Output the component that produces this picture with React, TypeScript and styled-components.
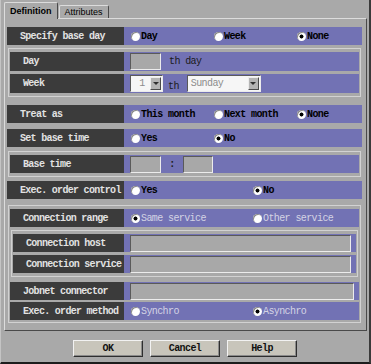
import styled, { createGlobalStyle } from 'styled-components';

const GlobalStyle = createGlobalStyle`
  html, body { margin: 0; padding: 0; background: #a9a9a9; }
  body { font-family: "Liberation Mono", "DejaVu Sans Mono", monospace; }
`;

const Window = styled.div`
  width: 371px;
  height: 364px;
  box-sizing: border-box;
  background: #a9a9a9;
  border-left: 1px solid #c4c4c4;
  border-right: 2px solid #3a3a3a;
  border-bottom: 2px solid #1c1c1c;
  padding: 2px 0 0 3px;
  display: flex;
  flex-direction: column;
`;

const TabBar = styled.div`
  display: flex;
  align-items: flex-end;
  height: 16px;
`;

const Tab = styled.div<{ $active?: boolean }>`
  box-sizing: border-box;
  height: ${(p) => (p.$active ? 17 : 13)}px;
  margin-bottom: ${(p) => (p.$active ? -1 : 0)}px;
  margin-left: ${(p) => (p.$active ? 0 : 1)}px;
  position: relative;
  z-index: ${(p) => (p.$active ? 1 : 0)};
  padding: 0 5px;
  display: flex;
  align-items: center;
  background: #a9a9a9;
  color: #000;
  font: ${(p) => (p.$active ? 'bold' : 'normal')} 9px "Liberation Sans", Arial, sans-serif;
  border-top: 1px solid #dcdcdc;
  border-left: 1px solid #dcdcdc;
  border-right: 1px solid #4a4a4a;
  border-radius: 2px 2px 0 0;
`;

const Panel = styled.div`
  width: 363px;
  height: 313px;
  box-sizing: border-box;
  border: 1px solid;
  border-color: #dcdcdc #4a4a4a #4a4a4a #dcdcdc;
  padding: 8px 4px 0 2px;
  display: flex;
  flex-direction: column;
`;

const Group = styled.div<{ $mt?: number; $pb?: number }>`
  margin: ${(p) => p.$mt ?? 0}px 1px 0;
  border: 1px solid #d2d2d2;
  padding: 3px 1px ${(p) => p.$pb ?? 3}px;
  display: flex;
  flex-direction: column;
`;

const Row = styled.div<{ $h?: number; $mt?: number }>`
  display: flex;
  height: ${(p) => p.$h ?? 18}px;
  margin-top: ${(p) => p.$mt ?? 0}px;
`;

const Label = styled.div<{ $w: number }>`
  flex: 0 0 ${(p) => p.$w}px;
  box-sizing: border-box;
  background: #3b3b3b;
  color: #e2e2e2;
  display: flex;
  align-items: center;
  padding-left: 13px;
  font-size: 10px;
  font-weight: bold;
  letter-spacing: -0.7px;
  white-space: nowrap;
`;

const Field = styled.div`
  flex: 1;
  background: #7272b4;
  display: flex;
  align-items: center;
  padding: 0 5px 0 6px;
  font-size: 10px;
  font-weight: bold;
  letter-spacing: -0.6px;
  white-space: nowrap;
`;

const Options = styled.div<{ $cols: string }>`
  flex: 1;
  display: grid;
  grid-template-columns: ${(p) => p.$cols};
  align-items: center;
  padding-left: 1px;
`;

const Option = styled.label<{ $disabled?: boolean }>`
  display: flex;
  align-items: center;
  gap: 1px;
  color: ${(p) => (p.$disabled ? '#d4d4e4' : '#000')};
  font-weight: ${(p) => (p.$disabled ? 'normal' : 'bold')};
`;

const Radio = styled.span<{ $on?: boolean }>`
  flex: none;
  width: 9px;
  height: 9px;
  border-radius: 50%;
  background: ${(p) => (p.$on ? 'radial-gradient(circle, #000 0 1.7px, #fff 2.3px)' : '#fff')};
  box-shadow: inset 1px 1px 0 #8a8a8a;
`;

const TextBox = styled.div<{ $w?: number }>`
  box-sizing: border-box;
  height: 17px;
  ${(p) => (p.$w ? `width: ${p.$w}px;` : 'flex: 1;')}
  background: #a8a8a8;
  border: 1px solid;
  border-color: #5a5a5a #ececec #ececec #5a5a5a;
`;

const Select = styled.div<{ $w: number }>`
  box-sizing: border-box;
  width: ${(p) => p.$w}px;
  height: 17px;
  display: flex;
  align-items: center;
  background: #f6f6f6;
  color: #8c8c8c;
  font-weight: normal;
  border: 1px solid;
  border-color: #5a5a5a #ececec #ececec #5a5a5a;
  padding: 0 1px 0 3px;
`;

const SelectValue = styled.span<{ $center?: boolean }>`
  flex: 1;
  text-align: ${(p) => (p.$center ? 'center' : 'left')};
`;

const SelectButton = styled.span`
  box-sizing: border-box;
  width: 11px;
  height: 13px;
  background: #b4b4b4;
  border: 1px solid;
  border-color: #ececec #4a4a4a #4a4a4a #ececec;
  display: flex;
  align-items: center;
  justify-content: center;

  &::before {
    content: '';
    border-left: 3px solid transparent;
    border-right: 3px solid transparent;
    border-top: 3px solid #303030;
  }
`;

const Suffix = styled.span<{ $low?: boolean }>`
  color: #1a1a1a;
  font-weight: normal;
  margin: 0 ${(p) => (p.$low ? 8 : 7)}px 0 ${(p) => (p.$low ? 5 : 8)}px;
  align-self: ${(p) => (p.$low ? 'flex-end' : 'center')};
  padding-bottom: ${(p) => (p.$low ? 1 : 0)}px;
`;

const Colon = styled.span`
  color: #1a1a1a;
  width: 22px;
  text-align: center;
`;

const ButtonBar = styled.div`
  display: flex;
  justify-content: center;
  gap: 7px;
  margin-top: 9px;
  padding-right: 3px;
`;

const Button = styled.button`
  box-sizing: border-box;
  width: 70px;
  height: 17px;
  padding: 0;
  background: #c8c5bb;
  color: #111;
  border: 1px solid;
  border-color: #f2f2f2 #2e2e2e #2e2e2e #f2f2f2;
  box-shadow: inset -1px -1px 0 #8a8a8a;
  font: bold 10px "Liberation Mono", monospace;
  letter-spacing: -0.6px;
`;

type Opt = { text: string; on?: boolean; disabled?: boolean };

const RadioRow = ({ cols, opts }: { cols: string; opts: Opt[] }) => (
  <Options $cols={cols}>
    {opts.map((o) => (
      <Option key={o.text} $disabled={o.disabled}>
        <Radio $on={o.on} />
        {o.text}
      </Option>
    ))}
  </Options>
);

const THREE = '83px 83px auto';
const TWO = '122px auto';

export default function App() {
  return (
    <>
      <GlobalStyle />
      <Window>
        <TabBar>
          <Tab $active>Definition</Tab>
          <Tab>Attributes</Tab>
        </TabBar>
        <Panel>
          <Row>
            <Label $w={117}>Specify base day</Label>
            <Field>
              <RadioRow cols={THREE} opts={[{ text: 'Day' }, { text: 'Week' }, { text: 'None', on: true }]} />
            </Field>
          </Row>

          <Group $mt={3}>
            <Row $h={19}>
              <Label $w={114}>Day</Label>
              <Field>
                <TextBox $w={31} />
                <Suffix>th day</Suffix>
              </Field>
            </Row>
            <Row $h={19} $mt={3}>
              <Label $w={114}>Week</Label>
              <Field>
                <Select $w={33}>
                  <SelectValue $center>1</SelectValue>
                  <SelectButton />
                </Select>
                <Suffix $low>th</Suffix>
                <Select $w={74}>
                  <SelectValue>Sunday</SelectValue>
                  <SelectButton />
                </Select>
              </Field>
            </Row>
          </Group>

          <Row $mt={8}>
            <Label $w={117}>Treat as</Label>
            <Field>
              <RadioRow
                cols={THREE}
                opts={[{ text: 'This month' }, { text: 'Next month' }, { text: 'None', on: true }]}
              />
            </Field>
          </Row>

          <Row $mt={6}>
            <Label $w={117}>Set base time</Label>
            <Field>
              <RadioRow cols="83px auto" opts={[{ text: 'Yes' }, { text: 'No', on: true }]} />
            </Field>
          </Row>

          <Group $mt={4}>
            <Row>
              <Label $w={114}>Base time</Label>
              <Field>
                <TextBox $w={31} />
                <Colon>:</Colon>
                <TextBox $w={30} />
              </Field>
            </Row>
          </Group>

          <Row $mt={4}>
            <Label $w={117}>Exec. order control</Label>
            <Field>
              <RadioRow cols={TWO} opts={[{ text: 'Yes' }, { text: 'No', on: true }]} />
            </Field>
          </Row>

          <Group $mt={6} $pb={2}>
            <Row>
              <Label $w={114}>Connection range</Label>
              <Field>
                <RadioRow
                  cols={TWO}
                  opts={[
                    { text: 'Same service', on: true, disabled: true },
                    { text: 'Other service', disabled: true },
                  ]}
                />
              </Field>
            </Row>
            <Group $mt={3}>
              <Row>
                <Label $w={111}>Connection host</Label>
                <Field>
                  <TextBox />
                </Field>
              </Row>
              <Row $mt={3}>
                <Label $w={111}>Connection service</Label>
                <Field>
                  <TextBox />
                </Field>
              </Row>
            </Group>
            <Row $mt={5}>
              <Label $w={114}>Jobnet connector</Label>
              <Field>
                <TextBox />
              </Field>
            </Row>
            <Row $mt={2}>
              <Label $w={114}>Exec. order method</Label>
              <Field>
                <RadioRow
                  cols={TWO}
                  opts={[
                    { text: 'Synchro', disabled: true },
                    { text: 'Asynchro', on: true, disabled: true },
                  ]}
                />
              </Field>
            </Row>
          </Group>
        </Panel>
        <ButtonBar>
          <Button>OK</Button>
          <Button>Cancel</Button>
          <Button>Help</Button>
        </ButtonBar>
      </Window>
    </>
  );
}
